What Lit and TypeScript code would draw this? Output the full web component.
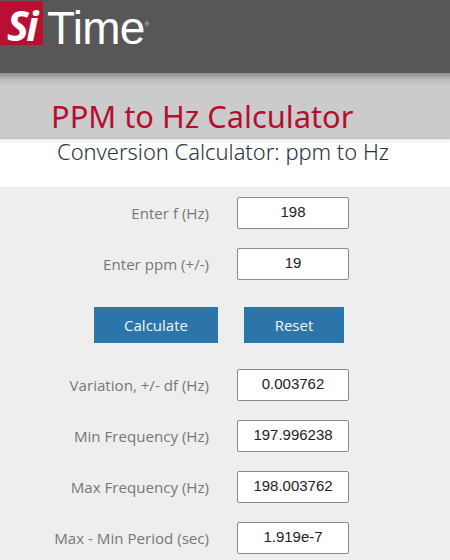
import { LitElement, html, css } from "lit";
import { customElement } from "lit/decorators.js";

const top = [["Enter f (Hz)", "198"], ["Enter ppm (+/-)", "19"]];
const results = [
  ["Variation, +/- df (Hz)", "0.003762"],
  ["Min Frequency (Hz)", "197.996238"],
  ["Max Frequency (Hz)", "198.003762"],
  ["Max - Min Period (sec)", "1.919e-7"],
];

@customElement("app-root")
export class AppRoot extends LitElement {
  static styles = css`
    :host { display: block; width: 450px; height: 560px; overflow: hidden; background: #fff; font-family: "Open Sans", sans-serif; }
    .header { height: 73px; background: #575757; display: flex; align-items: flex-start; padding-top: 1px; box-sizing: border-box; gap: 4px; }
    .mark { width: 43px; height: 44px; box-sizing: border-box; padding-top: 5px; background: #b90f32; color: #fff; font: italic 700 41px/39px "Open Sans", sans-serif; text-align: center; letter-spacing: -2.5px; }
    .word { color: #fff; font: 400 46px/50px "Liberation Sans", sans-serif; letter-spacing: -0.7px; display: flex; padding-top: 2px; }
    .reg { font: 400 6px/8px "Liberation Sans", sans-serif; letter-spacing: 0; padding-top: 17px; color: #ddd; }
    .band { height: 66px; box-sizing: border-box; background: linear-gradient(#8f8f8f 0, #bdbdbd 7px, #cbcbcb 13px); padding: 22px 0 0 51px; border-bottom: 1px solid #c4c4c4; }
    h1 { margin: 0; font: 400 30.8px/42px "Noto Sans", sans-serif; color: #b3102f; white-space: nowrap; }
    .sub { height: 48px; background: linear-gradient(#f0f0f0 0, #fff 6px); padding-left: 57px; font: 300 21.9px/26px "Noto Sans", sans-serif; color: #29323c; white-space: nowrap; }
    .panel { height: 373px; background: #eeeeee; padding-top: 10px; box-sizing: border-box; display: flex; flex-direction: column; }
    .row { display: flex; align-items: center; flex: none; height: 32px; margin-bottom: 19.3px; }
    label { width: 209px; text-align: right; font-size: 15.1px; color: #777; white-space: nowrap; }
    .val { margin-left: 28px; width: 112px; height: 32px; box-sizing: border-box; background: #fff; border: 1px solid #8a8a8a; border-radius: 2px; text-align: center; font: 400 15px/28px "Liberation Sans", sans-serif; color: #222; }
    .buttons { display: flex; flex: none; padding-left: 94px; gap: 26px; margin: 7px 0 26px; }
    button { height: 36px; border: 0; padding: 0; background: #2b75ab; color: #f2f6f9; font: 400 15px "Open Sans", sans-serif; }
    .calc { width: 124px; }
    .reset { width: 100px; }
  `;

  private row(r: string[]) {
    return html`<div class="row"><label>${r[0]}</label><div class="val">${r[1]}</div></div>`;
  }

  render() {
    return html`
      <div class="header">
        <div class="mark">Si</div>
        <div class="word">Time<span class="reg">®</span></div>
      </div>
      <div class="band"><h1>PPM to Hz Calculator</h1></div>
      <div class="sub">Conversion Calculator: ppm to Hz</div>
      <div class="panel">
        ${top.map((r) => this.row(r))}
        <div class="buttons">
          <button class="calc">Calculate</button>
          <button class="reset">Reset</button>
        </div>
        ${results.map((r) => this.row(r))}
      </div>
    `;
  }
}
